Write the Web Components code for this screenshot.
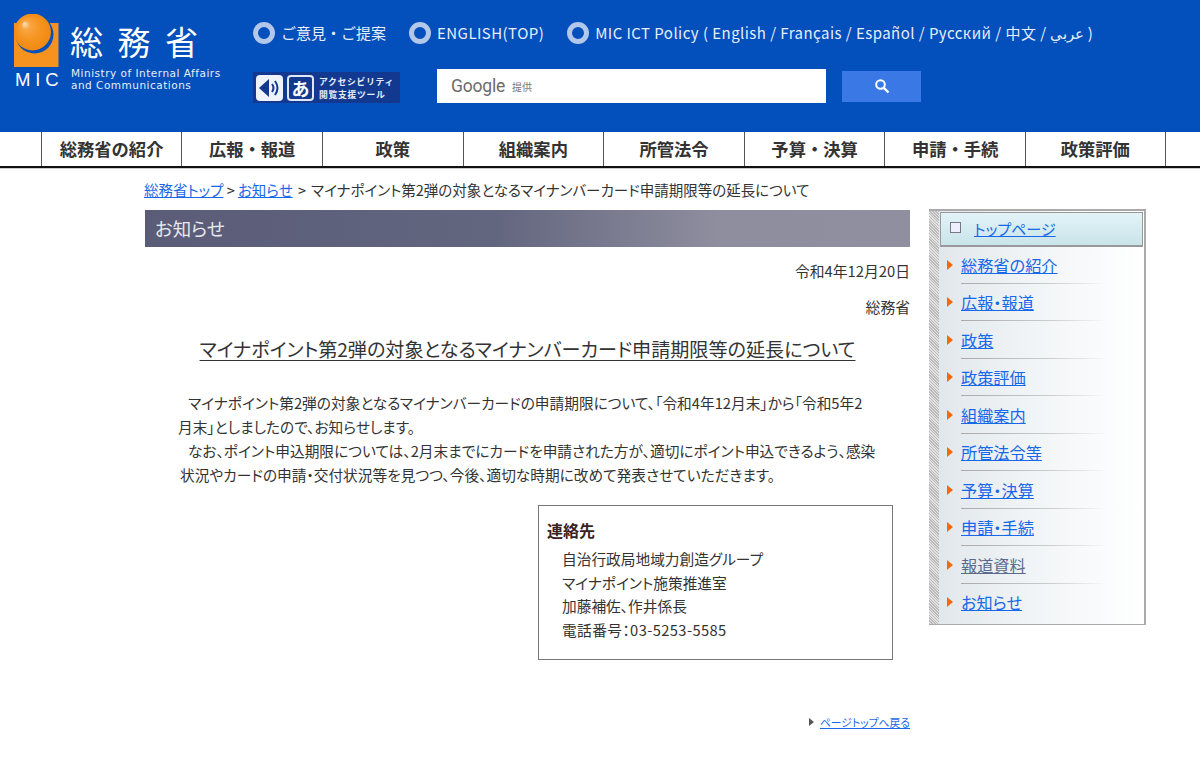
<!DOCTYPE html>
<html lang="ja">
<head>
<meta charset="utf-8">
<title>総務省</title>
<style>
  html, body { margin: 0; background: #fff; }
  body { font-family: "Noto Sans CJK JP", "Liberation Sans", sans-serif; color: #333; }
</style>
</head>
<body>
<mic-header></mic-header>
<mic-nav></mic-nav>
<mic-main>
  <mic-breadcrumb current="マイナポイント第2弾の対象となるマイナンバーカード申請期限等の延長について"></mic-breadcrumb>
  <mic-article></mic-article>
  <mic-side slot="side"></mic-side>
</mic-main>
<script>
  class MicHeader extends HTMLElement {
    constructor() {
      super();
      this.attachShadow({mode: "open"});
    }
    connectedCallback() {
      this.shadowRoot.innerHTML = `
      <style>
        :host { display: flex; height: 132px; background: #034fbc; color: #fff; box-sizing: border-box; padding: 14px 0 0 14px; }
        .logo { width: 239px; flex: none; display: grid; grid-template-columns: 56px 1fr; grid-template-rows: 45px auto; row-gap: 8px; }
        .logo svg { display: block; grid-row: 1; }
        .kanji { font-size: 33px; line-height: 36px; letter-spacing: 14.500px; margin-top: 9px; white-space: nowrap; font-weight: 400; }
        .mic { font: 18.500px/20px "Liberation Sans", sans-serif; letter-spacing: 4.800px; margin-top: 3px; margin-left: 1px; }
        .en { font: 10.500px/12px "DejaVu Sans", sans-serif; letter-spacing: .5px; white-space: nowrap; color: #e8eefa; margin-top: 0; margin-left: 1px; }
        .right { flex: 1; display: flex; flex-direction: column; }
        .links { display: flex; height: 36px; align-items: center; font-size: 15px; letter-spacing: .45px; color: #e6eefb; white-space: nowrap; margin-top: 0; }
        .links a { display: flex; align-items: center; gap: 6px; margin-right: 23px; }
        .links a:first-child { letter-spacing: 0; }
        .links i { width: 12px; height: 12px; border: 5px solid #b3c7ea; border-radius: 50%; flex: none; margin-top: 1px; }
        .row2 { display: flex; align-items: center; margin-top: 19px; }
        .access { width: 147px; height: 31px; margin-top: 3px; background: #12398f; display: flex; align-items: center; box-sizing: border-box; padding: 0 3px; gap: 4px; flex: none; }
        .access b { width: 27px; height: 26px; box-sizing: border-box; background: #eef2fb; border-radius: 4px; display: flex; align-items: center; justify-content: center; line-height: 1; flex: none; }
        .access b.a { background: #12398f; border: 2px solid #dfe6f6; color: #fff; font-size: 18px; }
        .access span { font-size: 8.800px; line-height: 13px; font-weight: 700; letter-spacing: .7px; color: #e6ebf8; white-space: nowrap; margin-left: 1px; }
        .search { width: 389px; height: 34px; background: #fff; margin-left: 37px; display: flex; align-items: center; padding-left: 14px; box-sizing: border-box; color: #6b6b6b; }
        .search em { font: normal 17.500px "Roboto", sans-serif; letter-spacing: -.2px; }
        .search small { font-size: 10px; margin-left: 7px; color: #777; }
        button { width: 79px; height: 31px; margin-left: 16px; border: 0; background: #3a78e6; display: flex; align-items: center; justify-content: center; padding: 0; }
      </style>
      <div class="logo">
        <svg width="46" height="53" viewBox="0 0 46 53">
          <defs><radialGradient id="b" cx=".5" cy=".5" r=".55" fx=".27" fy=".27"><stop offset="0" stop-color="#ffe2b8"/><stop offset=".22" stop-color="#f9a441"/><stop offset=".6" stop-color="#f6931f"/><stop offset="1" stop-color="#ee8710"/></radialGradient></defs>
          <rect x="0" y="9" width="44.500" height="44" fill="#f6931f"/>
          <circle cx="20.500" cy="20.500" r="19" fill="#034fbc"/>
          <circle cx="18.500" cy="18" r="18.500" fill="url(#b)"/>
        </svg>
        <div class="kanji">総務省</div>
        <div class="mic">MIC</div>
        <div class="en">Ministry of Internal Affairs<br>and Communications</div>
      </div>
      <div class="right">
        <div class="links">
          <a><i></i>ご意見・ご提案</a>
          <a><i></i>ENGLISH(TOP)</a>
          <a><i></i>MIC ICT Policy ( English / Français / Español / Русский / 中文 / عربي )</a>
        </div>
        <div class="row2">
          <div class="access">
            <b><svg width="24" height="22" viewBox="0 0 24 22"><path d="M1 11L11 2v18z" fill="#12398f"/><path d="M14 7q3 4 0 8M17 4q5 7 0 14" fill="none" stroke="#12398f" stroke-width="2"/></svg></b>
            <b class="a">あ</b>
            <span>アクセシビリティ<br>閲覧支援ツール</span>
          </div>
          <div class="search"><em>Google</em><small>提供</small></div>
          <button aria-label="検索"><svg width="16" height="16" viewBox="0 0 16 16"><circle cx="6.500" cy="6.500" r="4.300" fill="none" stroke="#fff" stroke-width="2"/><path d="M9.800 9.800L14.500 14.500" stroke="#fff" stroke-width="2.400"/></svg></button>
        </div>
      </div>`;
    }
  }

  class MicNav extends HTMLElement {
    constructor() {
      super();
      this.attachShadow({mode: "open"});
    }
    connectedCallback() {
      const items = ["総務省の紹介", "広報・報道", "政策", "組織案内", "所管法令", "予算・決算", "申請・手続", "政策評価"];
      this.shadowRoot.innerHTML = `
      <style>
        :host { display: flex; height: 36px; box-sizing: border-box; padding-left: 40.800px; border-bottom: 2px solid #111; box-shadow: 0 1px 0 #ccc; background: #fff; }
        div { width: 140.600px; flex: none; box-sizing: border-box; border-left: 1px solid #555; text-align: center; font-size: 17.300px; font-weight: 700; line-height: 33px; color: #333; }
        div:last-child { border-right: 1px solid #555; }
      </style>
      ${items.map(t => `<div>${t}</div>`).join("")}`;
    }
  }

  class MicMain extends HTMLElement {
    constructor() {
      super();
      this.attachShadow({mode: "open"});
    }
    connectedCallback() {
      this.shadowRoot.innerHTML = `
      <style>
        :host { display: grid; grid-template-columns: 765px 217px; column-gap: 19px; padding: 11px 0 0 145px; width: 1001px; font-feature-settings: "palt"; }
        .left { display: block; }
      </style>
      <div class="left"><slot></slot></div>
      <slot name="side"></slot>`;
    }
  }

  class MicBreadcrumb extends HTMLElement {
    constructor() {
      super();
      this.attachShadow({mode: "open"});
    }
    connectedCallback() {
      this.shadowRoot.innerHTML = `
      <style>
        :host { display: block; font-size: 14.500px; line-height: 21px; white-space: nowrap; color: #333; margin-left: -1px; }
        a { color: #1768e8; text-decoration: underline; }
        span { margin: 0 2px; }
      </style>
      <a>総務省トップ</a> &gt; <a>お知らせ</a> <span>&gt;</span> ${this.getAttribute("current")}`;
    }
  }

  class MicArticle extends HTMLElement {
    constructor() {
      super();
      this.attachShadow({mode: "open"});
    }
    connectedCallback() {
      this.shadowRoot.innerHTML = `
      <style>
        :host { display: block; margin-top: 10px; font-size: 14.800px; color: #333; }
        h2 { margin: 0; height: 37px; background: linear-gradient(90deg, #5a5c78 0%, #63667f 46%, #8f8e9f 75%, #908fa0 100%); color: #e8e8ee; font-weight: 400; font-size: 18.500px; line-height: 36px; padding-left: 10px; }
        .r { text-align: right; line-height: 20px; }
        .date { margin-top: 14px; }
        .org { margin-top: 16px; }
        h1 { margin: 19px 0 0; font-size: 19.100px; font-weight: 400; line-height: 26px; text-align: center; text-decoration: underline; text-underline-offset: 3px; }
        .body { margin: 29px 0 0 33px; width: 704px; line-height: 24px; white-space: nowrap; font-size: 14.700px; }
        .body p { margin: 0; text-indent: 10px; }
        .body .in { margin-left: 2px; }
        .contact { width: 355px; height: 155px; box-sizing: border-box; border: 1.500px solid #777; margin: 18px 0 0 393px; padding: 12px 0 0 8px; }
        .contact h3 { margin: 0 0 5px; font-size: 16px; font-weight: 700; line-height: 24px; color: #3a2222; }
        .contact div { padding-left: 15px; line-height: 23.700px; font-size: 14.700px; }
        .contact .tel { letter-spacing: .4px; }
        .top { display: flex; justify-content: flex-end; align-items: center; gap: 6px; margin-top: 52px; font-size: 10.800px; line-height: 20px; }
        .top i { border-left: 5px solid #555; border-top: 4px solid transparent; border-bottom: 4px solid transparent; }
        .top a { color: #1768e8; text-decoration: underline; }
      </style>
      <h2>お知らせ</h2>
      <div class="r date">令和4年12月20日</div>
      <div class="r org">総務省</div>
      <h1>マイナポイント第2弾の対象となるマイナンバーカード申請期限等の延長について</h1>
      <div class="body">
        <p>マイナポイント第2弾の対象となるマイナンバーカードの申請期限について、「令和4年12月末」から「令和5年2<br>月末」としましたので、お知らせします。</p>
        <p>なお、ポイント申込期限については、2月末までにカードを申請された方が、適切にポイント申込できるよう、感染<br><span class="in">状況やカードの申請・交付状況等を見つつ、今後、適切な時期に改めて発表させていただきます。</span></p>
      </div>
      <div class="contact">
        <h3>連絡先</h3>
        <div>自治行政局地域力創造グループ</div>
        <div>マイナポイント施策推進室</div>
        <div>加藤補佐、作井係長</div>
        <div class="tel">電話番号：03-5253-5585</div>
      </div>
      <div class="top"><i></i><a>ページトップへ戻る</a></div>`;
    }
  }

  class MicSide extends HTMLElement {
    constructor() {
      super();
      this.attachShadow({mode: "open"});
    }
    connectedCallback() {
      const items = ["総務省の紹介", "広報・報道", "政策", "政策評価", "組織案内", "所管法令等", "予算・決算", "申請・手続", "報道資料", "お知らせ"];
      this.shadowRoot.innerHTML = `
      <style>
        :host { display: block; width: 217px; height: 416px; margin-top: 30px; box-sizing: border-box; border: 1px solid #aaa; border-width: 2px 2px 1px 0; font-size: 16.200px;
          background: repeating-linear-gradient(45deg, #bbb 0 1px, #e2e2e2 1px 2px) left / 10px 100% no-repeat, linear-gradient(90deg, #dfe6ea 0%, #f2f5f7 50%, #fff 100%); padding-left: 10px; }
        a { color: #1768e8; text-decoration: underline; }
        a.seen { color: #5a6a8c; }
        .top { height: 35px; margin: 1px 1px 0 1px; box-sizing: border-box; border: 1px solid #999; border-bottom-width: 2px; background: linear-gradient(#e2f3f7, #c9e4ea); display: flex; align-items: center; padding-left: 9px; }
        .top i { width: 9px; height: 9px; border: 1px solid #778; background: #eef; margin-right: 13px; flex: none; margin-top: -3px; }
        .top a { font-size: 15px; margin-top: -2px; }
        ul { list-style: none; margin: -1px 0 0; padding: 0 0 0 8px; }
        li { height: 37.500px; display: flex; align-items: center; position: relative; }
        li::before { content: ""; border-left: 6px solid #f26a0a; border-top: 5px solid transparent; border-bottom: 5px solid transparent; margin-right: 8px; }
        li:not(:last-child)::after { content: ""; position: absolute; left: 14px; right: 36px; bottom: 0; height: 1px; background: linear-gradient(90deg, #aaa, #ccc 60%, transparent); }
      </style>
      <div class="top"><i></i><a>トップページ</a></div>
      <ul>${items.map(t => `<li><a${t === "報道資料" ? ' class="seen"' : ""}>${t}</a></li>`).join("")}</ul>`;
    }
  }

  customElements.define("mic-header", MicHeader);
  customElements.define("mic-nav", MicNav);
  customElements.define("mic-main", MicMain);
  customElements.define("mic-breadcrumb", MicBreadcrumb);
  customElements.define("mic-article", MicArticle);
  customElements.define("mic-side", MicSide);
</script>
</body>
</html>
